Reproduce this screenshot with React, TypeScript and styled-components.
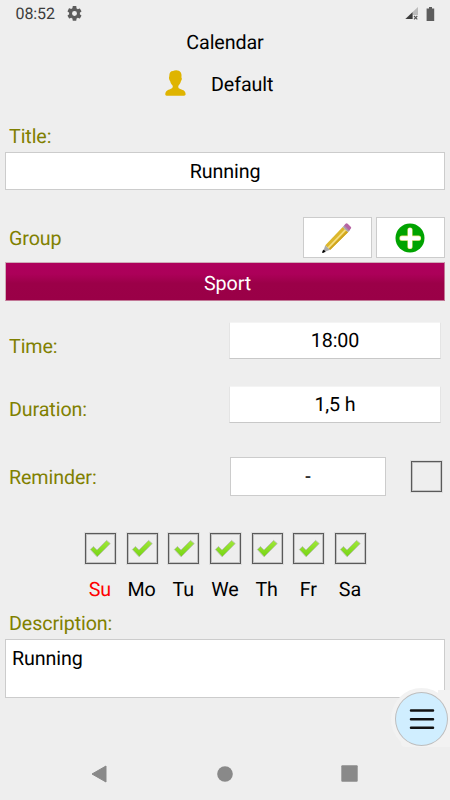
import React from "react";
import styled, { createGlobalStyle } from "styled-components";

const GlobalStyle = createGlobalStyle`
  *, *::before, *::after { box-sizing: border-box; }
  body { margin: 0; background: #eeeeee; }
  svg { display: block; flex: none; }
`;

const Screen = styled.main`
  position: relative;
  width: 450px;
  height: 800px;
  overflow: hidden;
  display: flex;
  flex-direction: column;
  background: #eeeeee;
  color: #000;
  font-family: Roboto, "Liberation Sans", sans-serif;
  font-size: 19.7px;
  line-height: 24px;
  letter-spacing: -0.1px;
  text-rendering: geometricPrecision;
`;

const StatusBar = styled.header`
  height: 30px;
  flex: none;
  display: flex;
  align-items: center;
  padding: 0 15px 3px 15.5px;
  gap: 12px;
  font-size: 16px;
  letter-spacing: -0.1px;
  color: #3c3c3c;
`;

const StatusIcons = styled.div`
  margin-left: auto;
  display: flex;
  align-items: center;
  gap: 7px;
`;

const PageTitle = styled.h1`
  margin: 1px 0 0;
  height: 24px;
  flex: none;
  text-align: center;
  font-size: inherit;
  font-weight: 400;
`;

const Profile = styled.div`
  margin-top: 13px;
  height: 31px;
  flex: none;
  display: flex;
  align-items: center;
  gap: 25px;
  padding: 0 0 1px 165px;

  & > span {
    padding-top: 3px;
  }
`;

const Label = styled.label`
  color: #808000;
`;

const LabelLine = styled.div<{ $top: number; $height: number }>`
  flex: none;
  margin-top: ${(p) => p.$top}px;
  height: ${(p) => p.$height}px;
  padding-left: 9px;
`;

const Field = styled.div<{ $width: number; $height: number }>`
  flex: none;
  width: ${(p) => p.$width}px;
  height: ${(p) => p.$height}px;
  display: flex;
  align-items: center;
  justify-content: center;
  background: #fff;
  border: 1px solid #cccccc;
`;

const WideField = styled(Field)`
  margin-left: 5px;
  padding-top: 1px;
`;

const PickerField = styled(Field)`
  padding-top: 1px;
  border-color: #f4f4f4 #e4e4e4 #c8c8c8;
`;

const GroupField = styled(WideField)`
  margin-top: 4px;
  padding: 5px 0 0 5px;
  color: #fff;
  background: linear-gradient(#ae005c 0%, #ac0059 30%, #9b0048 55%, #9a0047 100%);
  border-color: #cfacb8 #c27796 #c27796 #cfacb8;
`;

const GroupRow = styled.div`
  flex: none;
  margin-top: 27px;
  height: 41px;
  display: flex;
  align-items: center;
  gap: 4px;
  padding: 0 5px 0 9px;
`;

const GroupLabel = styled(Label)`
  margin-right: auto;
  padding-top: 3px;
`;

const IconButton = styled.button`
  width: 69px;
  height: 41px;
  padding: 0 1px 0 0;
  display: flex;
  align-items: center;
  justify-content: center;
  background: #fff;
  border: 1px solid #cccccc;
`;

const SettingRow = styled.div<{ $top: number; $height: number; $end: number; $shift: number }>`
  flex: none;
  margin-top: ${(p) => p.$top}px;
  height: ${(p) => p.$height}px;
  display: flex;
  align-items: center;
  justify-content: space-between;
  padding: 0 ${(p) => p.$end}px 0 9px;

  & > label {
    padding-top: ${(p) => p.$shift}px;
  }
`;

const ReminderControls = styled.div`
  display: flex;
  align-items: center;
  gap: 25px;
`;

const Box = styled.span`
  width: 31px;
  height: 31px;
  flex: none;
  display: flex;
  align-items: center;
  justify-content: center;
  border: 1px solid #5a5a5a;
  outline: 1px solid #dedede;
  box-shadow: inset 0 0 0 1px #c2c2c2;
`;

const Days = styled.div`
  flex: none;
  margin-top: 37px;
  padding-left: 79.5px;
  display: grid;
  grid-template-columns: repeat(7, 41.7px);
`;

const Day = styled.div<{ $holiday: boolean }>`
  display: flex;
  flex-direction: column;
  align-items: center;
  gap: 14px;
  color: ${(p) => (p.$holiday ? "#ff0000" : "#000")};

  & > span:last-child {
    margin-right: 1px;
  }
`;

const Notes = styled(Field)`
  margin-left: 5px;
  align-items: flex-start;
  justify-content: flex-start;
  padding: 7px 6px;
`;

const MenuCorner = styled.div`
  position: absolute;
  right: 0;
  bottom: 53px;
  width: 49px;
  height: 28px;
  border-bottom-left-radius: 4px;
  background: #f2f2f2;

  &::before {
    content: "";
    position: absolute;
    right: 0;
    bottom: 28px;
    width: 12px;
    height: 29px;
    background: #f2f2f2;
  }
`;

const MenuButton = styled.button`
  position: absolute;
  left: 395px;
  top: 692px;
  width: 53px;
  height: 54px;
  padding: 0;
  display: flex;
  align-items: center;
  justify-content: center;
  border: 1px solid #bdbdbd;
  border-radius: 50%;
  background: #d0eeff;
  box-shadow: 0 0 0 4px #f2f2f2;
  clip-path: inset(-4px -4px -1px -4px);
`;

const NavBar = styled.nav`
  flex: none;
  margin-top: auto;
  height: 53px;
  display: flex;
  align-items: center;
  justify-content: space-between;
  padding: 0 92.5px 0 91px;

  & > svg:nth-child(2) {
    margin-left: 2px;
  }
`;

const Gear = () => (
  <svg width="15" height="15" viewBox="2 2 20 20" fill="#5c5c5c">
    <path d="M19.14 12.94c.04-.3.06-.61.06-.94s-.02-.64-.07-.94l2.03-1.58a.49.49 0 0 0 .12-.61l-1.92-3.32a.49.49 0 0 0-.59-.22l-2.39.96a7 7 0 0 0-1.62-.94l-.36-2.54A.48.48 0 0 0 13.92 2h-3.84a.48.48 0 0 0-.48.41l-.36 2.54a7 7 0 0 0-1.62.94l-2.39-.96a.48.48 0 0 0-.59.22L2.72 8.87a.48.48 0 0 0 .12.61l2.03 1.58a7 7 0 0 0 0 1.88l-2.03 1.58a.49.49 0 0 0-.12.61l1.92 3.32c.12.22.37.29.59.22l2.39-.96c.5.38 1.03.7 1.62.94l.36 2.54c.05.24.24.41.48.41h3.84c.24 0 .44-.17.47-.41l.36-2.54a7 7 0 0 0 1.62-.94l2.39.96c.22.08.47 0 .59-.22l1.92-3.32a.48.48 0 0 0-.12-.61zM12 15.3a3.3 3.3 0 1 1 0-6.6 3.3 3.3 0 0 1 0 6.6z" />
  </svg>
);

const Signal = () => (
  <svg width="14" height="14" viewBox="0 0 14 14">
    <path d="M13 0v8H8v4H0z" fill="#bcbcbc" />
    <path d="M7.5 5.2V12H.5z" fill="#3d3d3d" />
    <path d="m9 9 3.3 3.3m0-3.3L9 12.3" stroke="#555" strokeWidth="1.1" />
  </svg>
);

const Battery = () => (
  <svg width="9" height="14" viewBox="0 0 9 14">
    <path d="M3 0h3v1.4h2.2V14H.6V1.4H3z" fill="#5d5d5d" />
  </svg>
);

const Person = () => (
  <svg width="21" height="26" viewBox="0 0 21 26" fill="#dfb400">
    <path d="M4.3 6.2C4.2 3 5.6 1.2 8 1.1 10.2-.4 14.3-.1 15.8 2.6c1 1.8.7 3.5.6 5 .8.7.4 2.5-.4 3.5-.5 2.1-1.5 3.6-2.6 4.6-.4 1.7.2 2.6 1.8 3.2 3.8 1.3 5.2 2 5.4 5.1.2 1.4-1 1.8-2.8 1.8H3c-2.1 0-2.9-.5-2.7-2 .5-3.1 2.2-3.6 5.2-4.8 1.8-.7 2.5-1.5 2.2-3.3-1.1-.9-2.1-2.5-2.6-4.6-.9-1-1.5-3.2-.8-4.9z" />
  </svg>
);

const Pencil = () => (
  <svg width="30" height="30" viewBox="0 0 30 30">
    <path d="m3.3 22.2 5 4.6L.8 29.4z" fill="#aaa" />
    <path d="m1.4 27.2 1.8 1.3-2.6 1z" fill="#000" stroke="#000" />
    <path d="M3.3 22.2 20.7 4l5.3 5.2L8.3 26.8z" fill="#dcb72c" />
    <path d="M5.6 24.2 22.9 6.2l1.2 1.1L6.9 25.4z" fill="#f5df85" />
    <path d="m8.3 26.8-1.3-1.2L24.7 7.9 26 9.2z" fill="#d0a51d" />
    <path d="m20.7 4 1.6-1.7 5.4 5.2L26 9.2z" fill="#a8a0a9" />
    <path d="m22 2.6 1.6-1.8q1-1 2.1 0l3 3q1 1 0 2l-1.5 2z" fill="#b765a4" />
  </svg>
);

const Plus = () => (
  <svg width="30" height="30" viewBox="0 0 30 30">
    <circle cx="15" cy="15" r="14.5" fill="#00a300" />
    <path d="M15 7v16.5M7 15.2h16.5" stroke="#e7e27a" strokeWidth="5.2" strokeLinecap="round" />
    <path d="M15 7v16.5M7 15.2h16.5" stroke="#fff" strokeWidth="4" strokeLinecap="round" />
  </svg>
);

const Check = () => (
  <svg width="22" height="20" viewBox="0 0 22 20">
    <defs>
      <linearGradient id="tick" x1="0" y1="0" x2="0" y2="1">
        <stop offset="0" stopColor="#a1e83a" />
        <stop offset="1" stopColor="#75d412" />
      </linearGradient>
    </defs>
    <path
      d="m1.4 10.5 3-3L8 11l9.6-9.6 3.6 3.2L8.2 17.8z"
      fill="url(#tick)"
      stroke="#b4bea8"
      strokeWidth="0.9"
      strokeLinejoin="round"
    />
  </svg>
);

const Bars = () => (
  <svg width="26" height="22" viewBox="0 0 26 22">
    <path d="M2 2.5h22M2 11.3h22M2 19.7h22" stroke="#111" strokeWidth="2.5" strokeLinecap="round" />
  </svg>
);

const days = ["Su", "Mo", "Tu", "We", "Th", "Fr", "Sa"];

export default function App() {
  return (
    <>
      <GlobalStyle />
      <Screen>
        <StatusBar>
          <span>08:52</span>
          <Gear />
          <StatusIcons>
            <Signal />
            <Battery />
          </StatusIcons>
        </StatusBar>
        <PageTitle>Calendar</PageTitle>
        <Profile>
          <Person />
          <span>Default</span>
        </Profile>

        <LabelLine $top={26} $height={27}>
          <Label>Title:</Label>
        </LabelLine>
        <WideField $width={440} $height={38}>Running</WideField>

        <GroupRow>
          <GroupLabel>Group</GroupLabel>
          <IconButton aria-label="Edit group"><Pencil /></IconButton>
          <IconButton aria-label="Add group"><Plus /></IconButton>
        </GroupRow>
        <GroupField $width={440} $height={39}>Sport</GroupField>

        <SettingRow $top={21} $height={37} $end={9} $shift={13}>
          <Label>Time:</Label>
          <PickerField $width={212} $height={37}>18:00</PickerField>
        </SettingRow>
        <SettingRow $top={27} $height={37} $end={9} $shift={11}>
          <Label>Duration:</Label>
          <PickerField $width={212} $height={37}>1,5 h</PickerField>
        </SettingRow>
        <SettingRow $top={34} $height={39} $end={8} $shift={2}>
          <Label>Reminder:</Label>
          <ReminderControls>
            <Field $width={156} $height={39}>-</Field>
            <Box />
          </ReminderControls>
        </SettingRow>

        <Days>
          {days.map((day, i) => (
            <Day key={day} $holiday={i === 0}>
              <Box><Check /></Box>
              <span>{day}</span>
            </Day>
          ))}
        </Days>

        <LabelLine $top={10} $height={27}>
          <Label>Description:</Label>
        </LabelLine>
        <Notes $width={440} $height={59}>Running</Notes>

        <MenuCorner />
        <MenuButton aria-label="Menu"><Bars /></MenuButton>

        <NavBar>
          <svg width="16" height="18" viewBox="0 0 16 18">
            <path d="M15 1v16L1 9z" fill="#898989" stroke="#898989" strokeLinejoin="round" />
          </svg>
          <svg width="16" height="16" viewBox="0 0 16 16">
            <circle cx="8" cy="8" r="7.8" fill="#898989" />
          </svg>
          <svg width="17" height="17" viewBox="0 0 17 17">
            <rect x="0.3" y="0.3" width="16.4" height="16.4" rx="1" fill="#898989" />
          </svg>
        </NavBar>
      </Screen>
    </>
  );
}
